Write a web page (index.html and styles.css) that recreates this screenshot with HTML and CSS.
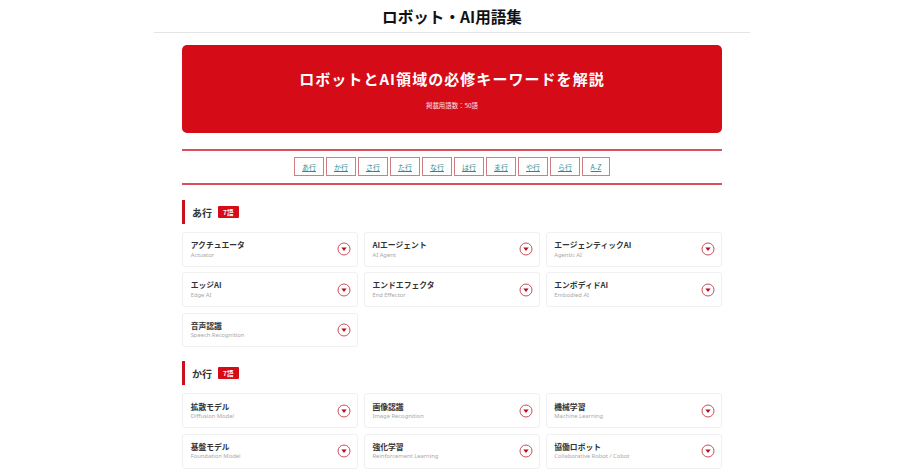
FILE: index.html
```html
<!DOCTYPE html>
<html lang="ja">
<head>
<meta charset="utf-8">
<title>ロボット・AI用語集</title>
<link rel="stylesheet" href="styles.css">
</head>
<body>
<svg class="defs" width="0" height="0" aria-hidden="true"><symbol id="toggle" viewBox="0 0 14 14"><circle cx="7" cy="7" r="6" fill="none" stroke="#c9505a" stroke-width="1"/><path d="M4.4 5.4h5.2L7 9z" fill="#b50d1e"/></symbol></svg>
<div class="page">
  <header class="top"><h1>ロボット・AI用語集</h1></header>
  <main class="wrap">
    <section class="hero">
      <h2>ロボットとAI領域の必修キーワードを解説</h2>
      <p>掲載用語数：50語</p>
    </section>
    <nav class="kana">
      <a href="#">あ行</a><a href="#">か行</a><a href="#">さ行</a><a href="#">た行</a><a href="#">な行</a><a href="#">は行</a><a href="#">ま行</a><a href="#">や行</a><a href="#">ら行</a><a href="#">A-Z</a>
    </nav>
    <section class="group">
      <div class="group-head"><h3>あ行</h3><span class="count">7語</span></div>
      <div class="grid">
        <div class="card"><div class="txt"><b>アクチュエータ</b><small>Actuator</small></div><svg class="ic"><use href="#toggle"/></svg></div>
        <div class="card"><div class="txt"><b>AIエージェント</b><small>AI Agent</small></div><svg class="ic"><use href="#toggle"/></svg></div>
        <div class="card"><div class="txt"><b>エージェンティックAI</b><small>Agentic AI</small></div><svg class="ic"><use href="#toggle"/></svg></div>
        <div class="card"><div class="txt"><b>エッジAI</b><small>Edge AI</small></div><svg class="ic"><use href="#toggle"/></svg></div>
        <div class="card"><div class="txt"><b>エンドエフェクタ</b><small>End Effector</small></div><svg class="ic"><use href="#toggle"/></svg></div>
        <div class="card"><div class="txt"><b>エンボディドAI</b><small>Embodied AI</small></div><svg class="ic"><use href="#toggle"/></svg></div>
        <div class="card"><div class="txt"><b>音声認識</b><small>Speech Recognition</small></div><svg class="ic"><use href="#toggle"/></svg></div>
      </div>
    </section>
    <section class="group">
      <div class="group-head"><h3>か行</h3><span class="count">7語</span></div>
      <div class="grid">
        <div class="card"><div class="txt"><b>拡散モデル</b><small>Diffusion Model</small></div><svg class="ic"><use href="#toggle"/></svg></div>
        <div class="card"><div class="txt"><b>画像認識</b><small>Image Recognition</small></div><svg class="ic"><use href="#toggle"/></svg></div>
        <div class="card"><div class="txt"><b>機械学習</b><small>Machine Learning</small></div><svg class="ic"><use href="#toggle"/></svg></div>
        <div class="card"><div class="txt"><b>基盤モデル</b><small>Foundation Model</small></div><svg class="ic"><use href="#toggle"/></svg></div>
        <div class="card"><div class="txt"><b>強化学習</b><small>Reinforcement Learning</small></div><svg class="ic"><use href="#toggle"/></svg></div>
        <div class="card"><div class="txt"><b>協働ロボット</b><small>Collaborative Robot / Cobot</small></div><svg class="ic"><use href="#toggle"/></svg></div>
      </div>
    </section>
  </main>
</div>
</body>
</html>
```

FILE: styles.css
```css
* { box-sizing: border-box; }
html, body { margin: 0; height: 472px; overflow: hidden; background: #fff; }
body { font-family: "Noto Sans CJK JP", "Noto Sans", sans-serif; color: #222; }
.defs { display: block; height: 0; }
.page { width: 596px; margin: 0 0 0 154px; }
.top { height: 33px; border-bottom: 1px solid #e4e4e4; display: flex; align-items: center; justify-content: center; }
.top h1 { margin: 0; font-size: 15.6px; line-height: 24px; font-weight: 700; color: #111; }
.wrap { padding: 12px 28px 0; }
.hero { height: 87.5px; background: #d50c18; border-radius: 5px; color: #fff; text-align: center; padding-top: 22px; }
.hero h2 { margin: 0; font-size: 15px; line-height: 24px; font-weight: 700; letter-spacing: 1.05px; }
.hero p { margin: 10px 0 0; font-size: 6.4px; line-height: 9px; color: #fbe4e6; }
.kana { margin-top: 16px; height: 36px; border-top: 2px solid #d9505a; border-bottom: 2px solid #d9505a; display: flex; justify-content: center; align-items: center; gap: 2.5px; }
.kana a { display: flex; align-items: center; justify-content: center; width: 29.5px; height: 19px; border: 1.5px solid #d47c83; font-size: 7px; color: #1f8f96; text-decoration: underline; }
.kana a:last-child { width: 27.5px; }
.group { margin-top: 15.5px; }
.group + .group { margin-top: 14px; }
.group-head { height: 24px; border-left: 3px solid #c8101e; padding-left: 7px; display: flex; align-items: center; gap: 6px; margin-bottom: 8px; }
.group-head h3 { margin: 0; font-size: 10px; font-weight: 700; color: #333; }
.count { width: 20.5px; height: 12px; background: #d50c18; color: #fff; font-size: 6.5px; font-weight: 700; display: flex; align-items: center; justify-content: center; border-radius: 1px; }
.grid { display: grid; grid-template-columns: repeat(3, 1fr); gap: 5.4px; }
.card { height: 34.9px; border: 1px solid #f0f0f0; border-radius: 3px; padding: 0 6px 0 7.7px; display: flex; align-items: center; justify-content: space-between; }
.txt { display: flex; flex-direction: column; gap: 0.5px; }
.txt b { font-size: 7.8px; line-height: 11px; font-weight: 700; color: #333; }
.txt small { font-size: 5.8px; line-height: 9px; color: #a8a8a8; font-family: "Noto Sans", sans-serif; }
.ic { width: 14px; height: 14px; flex: none; }
```
